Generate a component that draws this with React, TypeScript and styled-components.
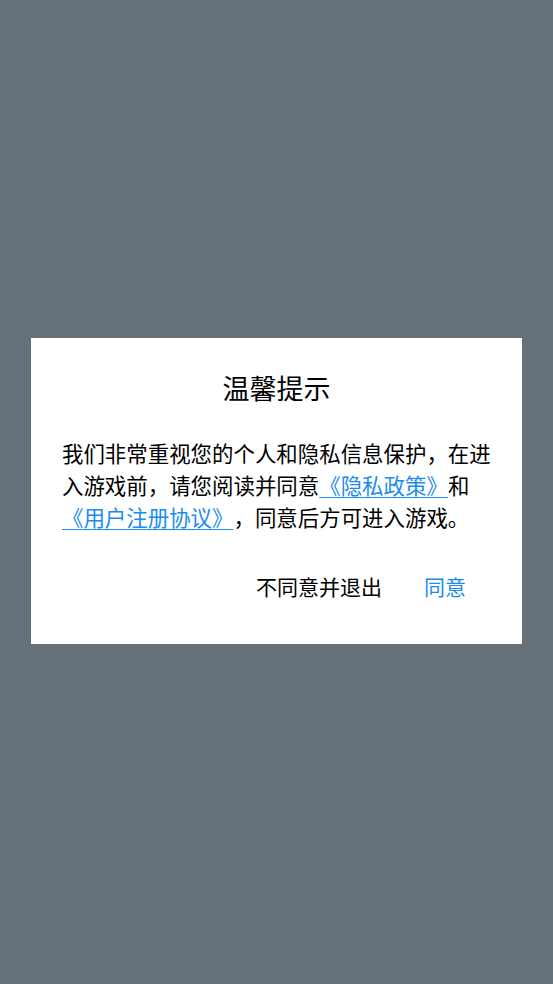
import React from "react";
import styled, { createGlobalStyle } from "styled-components";

const GlobalStyle = createGlobalStyle`
    html, body {
        margin: 0;
        padding: 0;
        height: 100%;
    }
    body {
        background: #657078;
        font-family: "Noto Sans CJK SC", "Noto Sans", sans-serif;
    }
`;

const App = () => {
    return <Overlay>
        <GlobalStyle/>
        <Dialog>
            <Title>温馨提示</Title>
            <Body>
                我们非常重视您的个人和隐私信息保护，在进入游戏前，请您阅读并同意
                <Link href="#">《隐私政策》</Link>和
                <Link href="#">《用户注册协议》</Link>，同意后方可进入游戏。
            </Body>
            <Actions>
                <Button>不同意并退出</Button>
                <Button primary>同意</Button>
            </Actions>
        </Dialog>
    </Overlay>
}

export default App;

const Overlay = styled.div`
    min-height: 100vh;
    box-sizing: border-box;
    padding-bottom: 2px;
    display: flex;
    align-items: center;
    justify-content: center;
`

const Dialog = styled.div`
    width: 491px;
    box-sizing: border-box;
    background: #fff;
    padding: 30px 31px 42px;
    display: flex;
    flex-direction: column;
`

const Title = styled.h2`
    margin: 0;
    font-size: 27px;
    font-weight: 400;
    line-height: 40px;
    text-align: center;
    color: #000;
`

const Body = styled.p`
    margin: 29px 0 0;
    font-size: 21.45px;
    line-height: 32px;
    color: #000;
    line-break: strict;
    text-spacing-trim: space-all;
`

const Link = styled.a`
    color: #1a8cf0;
    text-decoration: underline;
    text-underline-offset: 3px;
    text-decoration-thickness: 1px;
`

const Actions = styled.div`
    margin-top: 37px;
    display: flex;
    justify-content: flex-end;
    gap: 42px;
    padding-right: 25px;
`

const Button = styled.button<{ primary?: boolean }>`
    border: none;
    background: none;
    padding: 0;
    font-family: inherit;
    font-size: 21px;
    line-height: 32px;
    color: ${props => props.primary ? "#1a8cf0" : "#000"};
    cursor: pointer;
`
